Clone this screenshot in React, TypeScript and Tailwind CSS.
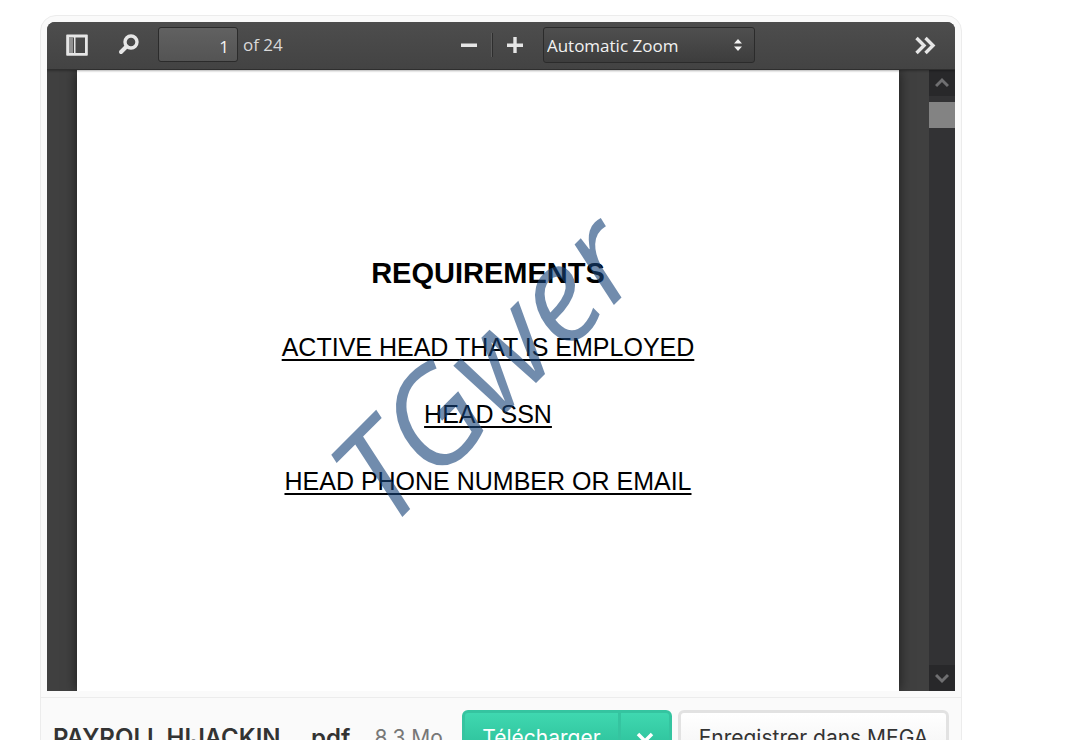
const requirements = ["ACTIVE HEAD THAT IS EMPLOYED", "HEAD SSN", "HEAD PHONE NUMBER OR EMAIL"]

function Toolbar() {
  return (
    <div className="relative z-10 flex h-12 items-center border-b border-[#2e2e2e] bg-linear-to-b from-[#4d4d4d] to-[#434343] pr-4 pb-0.5 pl-[18px] font-['Open_Sans',sans-serif] text-[#d9d9d9] shadow-[0_1px_2px_rgba(0,0,0,0.3)]">
      <button type="button" aria-label="Toggle sidebar" className="mr-7">
        <svg width="24" height="24" viewBox="0 0 24 24">
          <path
            fillRule="evenodd"
            d="M2 1.500h20a.8.8 0 0 1 .8.8v19.700a.8.8 0 0 1-.8.8H2a.8.8 0 0 1-.8-.8V2.300a.8.8 0 0 1 .8-.8zM4 4.500v15.500h5V4.500zM10.500 4.500v15.500h9.500V4.500z"
            fill="#e6e6e6"
          />
          <path d="M4 4.500h4V20H4z" fill="#919191" />
        </svg>
      </button>
      <button type="button" aria-label="Find" className="mr-[17px]">
        <svg width="24" height="24" viewBox="0 0 24 24" fill="none" stroke="#e6e6e6" strokeLinecap="round">
          <circle cx="14" cy="9" r="6" strokeWidth="3.400" />
          <path d="M9.500 13.500L4 19" strokeWidth="4" />
        </svg>
      </button>
      <input
        type="text"
        aria-label="Page"
        defaultValue="1"
        className="mr-[5px] h-[35px] w-20 rounded-[3px] border border-[#2b2b2b] bg-linear-to-b from-[#616161] to-[#545454] pt-[3px] pr-2 text-right text-[17px] text-[#f2f2f2]"
      />
      <span className="text-[17px] leading-6">of 24</span>

      <div className="mx-auto flex items-center pl-5">
        <button type="button" aria-label="Zoom out" className="mr-3">
          <svg width="20" height="20" viewBox="0 0 20 20">
            <path d="M2 8.500h16V12H2z" fill="#e6e6e6" />
          </svg>
        </button>
        <div className="mr-3 h-6 w-0.5 border-l border-[#5c5c5c] bg-[#2e2e2e]" />
        <button type="button" aria-label="Zoom in" className="mr-[18px]">
          <svg width="20" height="20" viewBox="0 0 20 20">
            <path d="M2 8.500h6.300V2h3.400v6.500H18V12h-6.300v6H8.300v-6H2z" fill="#e6e6e6" />
          </svg>
        </button>
        <div className="relative">
          <select
            aria-label="Zoom"
            className="h-9 w-[212px] appearance-none rounded-[3px] border border-[#2b2b2b] bg-linear-to-b from-[#4f4f4f] to-[#3d3d3d] pt-0.5 pl-[3px] text-[17px] text-[#f2f2f2]"
          >
            <option>Automatic Zoom</option>
          </select>
          <svg className="pointer-events-none absolute top-3 right-3" width="10" height="12" viewBox="0 0 10 12">
            <path d="M5 0l4 4.500H1zM5 12l4-4.500H1z" fill="#f2f2f2" />
          </svg>
        </div>
      </div>

      <button type="button" aria-label="Tools">
        <svg width="28" height="24" viewBox="0 0 28 24" fill="none" stroke="#e6e6e6" strokeWidth="3.400">
          <path d="M5.500 5l7.500 7.500L5.500 20M14.500 5l7.500 7.500-7.500 7.500" />
        </svg>
      </button>
    </div>
  )
}

function Scrollbar() {
  return (
    <div className="flex w-[26px] shrink-0 flex-col bg-[#323234]">
      <button type="button" aria-label="Scroll up" className="flex h-[26px] items-center justify-center bg-[#28282a]">
        <svg width="14" height="12" viewBox="0 0 14 12" fill="none" stroke="#6f6f71" strokeWidth="3">
          <path d="M1 9l6-6 6 6" />
        </svg>
      </button>
      <div className="mt-1.5 h-[26px] bg-[#838383]" />
      <button
        type="button"
        aria-label="Scroll down"
        className="mt-auto flex h-[26px] items-center justify-center bg-[#28282a]"
      >
        <svg width="14" height="12" viewBox="0 0 14 12" fill="none" stroke="#6f6f71" strokeWidth="3">
          <path d="M1 3l6 6 6-6" />
        </svg>
      </button>
    </div>
  )
}

function PdfPage() {
  return (
    <div className="relative flex-1 bg-white pt-[187px] pb-[194px] text-center font-['Liberation_Sans',sans-serif] text-black shadow-[0_0_12px_rgba(0,0,0,0.6)]">
      <h1 className="mb-[42px] text-[29px] leading-8 font-bold">REQUIREMENTS</h1>
      <div className="flex flex-col gap-[35px]">
        {requirements.map((item) => (
          <p key={item} className="text-[25px] leading-8 underline decoration-2 underline-offset-3">
            {item}
          </p>
        ))}
      </div>
      {/* watermark */}
      <div className="pointer-events-none absolute inset-0 flex items-center justify-center pr-3 pb-8">
        <span className="-rotate-45 font-['Open_Sans',sans-serif] text-[132px] leading-none font-medium text-[#174379]/61 italic">
          TGwer
        </span>
      </div>
    </div>
  )
}

function FileBar() {
  return (
    <div className="-mx-1.5 mt-1.5 flex items-start border-t border-[#ececec] px-3 pt-3 font-['Inter',sans-serif] text-[#333]">
      <div className="flex min-w-0 flex-1 items-center whitespace-nowrap">
        <span className="text-2xl leading-[56px] font-semibold">PAYROLL HIJACKIN....pdf</span>
        <span className="ml-6 text-[21px] leading-[56px] text-[#777]">8.3 Mo</span>
      </div>
      <div className="mr-1.5 flex h-14 w-[210px] shrink-0 rounded-md border-[3px] border-[#35c4a0] bg-linear-to-b from-[#3fd8b0] to-[#26b893] text-white">
        <button type="button" className="flex-1 border-r-[3px] border-[#35c4a0] text-[21px]">
          Télécharger
        </button>
        <button type="button" aria-label="Plus d'options" className="flex w-12 items-center justify-center">
          <svg width="18" height="14" viewBox="0 0 18 14" fill="none" stroke="currentColor" strokeWidth="3.500">
            <path d="M2 3l7 7 7-7" />
          </svg>
        </button>
      </div>
      <button
        type="button"
        className="h-14 w-[271px] shrink-0 rounded-md border-[3px] border-[#e2e2e2] bg-linear-to-b from-white to-[#f2f2f2] text-[21px]"
      >
        Enregistrer dans MEGA
      </button>
    </div>
  )
}

export default function App() {
  return (
    <main className="h-screen overflow-hidden bg-white pt-[15px] pr-[116px] pl-10">
      <div className="rounded-2xl border border-[#ececec] bg-[#fafafa] p-1.5">
        <section className="overflow-hidden rounded-t-lg bg-[#404040]">
          <Toolbar />
          <div className="flex">
            <div className="flex flex-1 overflow-hidden px-[30px]">
              <PdfPage />
            </div>
            <Scrollbar />
          </div>
        </section>
        <FileBar />
      </div>
    </main>
  )
}
